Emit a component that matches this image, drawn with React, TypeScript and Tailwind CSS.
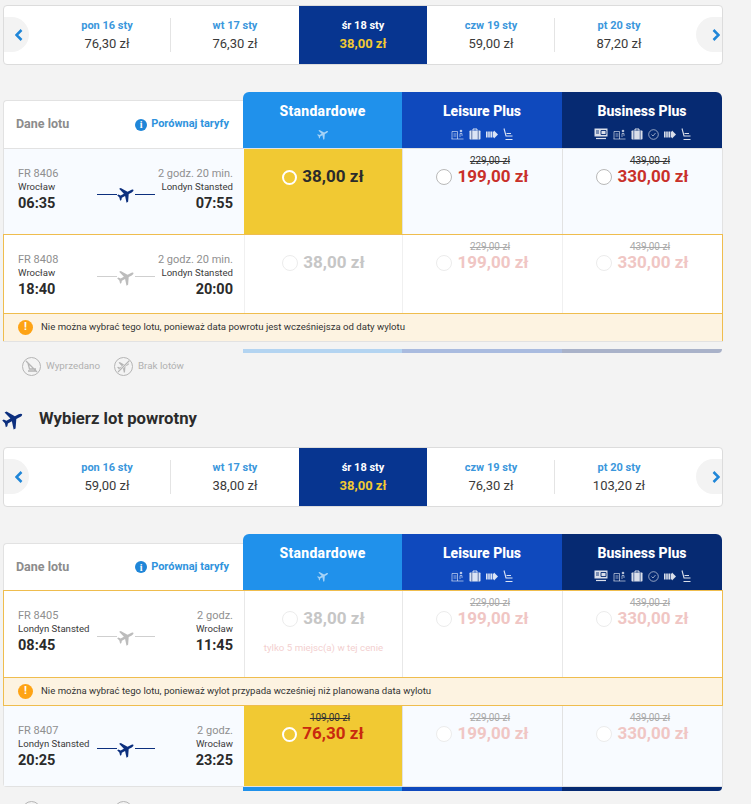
import React from "react";

const PLANE = "M12 .8c1 0 1.7 1.6 1.7 3.4v4.6l8.8 5.6v2.4l-8.8-2.5v4.9l2.5 2v1.9L12 22l-4.2 1.1v-1.9l2.5-2v-4.9L1.500 16.800v-2.400l8.8-5.600V4.200C10.300 2.400 11 .8 12 .8z";

function Plane({ size, className }: { size: number; className: string }) {
  return (
    <svg width={size} height={size} viewBox="0 0 24 24" className={className}>
      <path d={PLANE} fill="currentColor" transform="rotate(62 12 12)" />
    </svg>
  );
}

function Ico({ kind }: { kind: string }) {
  const c = "shrink-0 text-white/70";
  if (kind === "plane") return <Plane size={12} className="text-white/60" />;
  if (kind === "card")
    return (
      <svg width="14" height="12" viewBox="0 0 14 12" className="shrink-0 text-white/85">
        <rect x="0.500" y="0.500" width="13" height="8" fill="currentColor" />
        <path d="M2 3h3M2 5h3M7 2.500h5v4H7z" stroke="#062a72" fill="none" strokeWidth="0.900" />
        <path d="M2 10.500h10" stroke="currentColor" strokeWidth="1.200" />
      </svg>
    );
  if (kind === "board")
    return (
      <svg width="13" height="12" viewBox="0 0 13 12" fill="none" stroke="currentColor" strokeWidth="0.800" className={c}>
        <path d="M.5 11h12M1 3.500h5.500v7.500M1 3.500V11M2.500 6h3M2.500 8h3" />
        <circle cx="10" cy="3" r="1.300" fill="currentColor" stroke="none" />
        <path d="M9 9V5.500h2V8" />
      </svg>
    );
  if (kind === "bag")
    return (
      <svg width="12" height="12" viewBox="0 0 12 12" className="shrink-0 text-white/85">
        <path d="M4 2.500V1h4v1.500" fill="none" stroke="currentColor" />
        <rect x="0.500" y="2.500" width="11" height="9" rx="0.800" fill="currentColor" />
        <path d="M2.800 2.500v9M9.200 2.500v9" stroke="#062a72" strokeWidth="0.600" />
      </svg>
    );
  if (kind === "clock")
    return (
      <svg width="11" height="11" viewBox="0 0 11 11" fill="none" stroke="currentColor" strokeWidth="0.800" className={c}>
        <circle cx="5.500" cy="5.500" r="4.800" />
        <path d="M3.500 5.500l1.500 1.500 2.500-3" />
      </svg>
    );
  if (kind === "fast")
    return (
      <svg width="12" height="9" viewBox="0 0 12 9" className="shrink-0 text-white/85">
        <path d="M0 1.500h1.600v6H0zM2.200 1.500h1.600v6H2.200zM4.400 1.500H6v6H4.400zM6.600 1.500h1.400v6H6.600zM8 .5l4 4-4 4z" fill="currentColor" />
      </svg>
    );
  return (
    <svg width="10" height="13" viewBox="0 0 10 13" fill="none" stroke="currentColor" strokeWidth="1.100" className="shrink-0 text-white/85">
      <path d="M1 .5l2 7.500h6.500M3.500 5.500h4.500M2.500 11.500h7" />
    </svg>
  );
}

function DateBar({ items }: { items: [string, string][] }) {
  return (
    <div className="relative h-[60px] w-[720px] rounded border border-[#dcdcdc] bg-white pl-[39px]">
      <div className="flex h-full">
        {items.map(([d, p], i) => (
          <div
            key={d}
            className={
              i === 2
                ? "flex h-[58px] w-[128px] flex-col items-center justify-center bg-[#073590]"
                : "flex h-[58px] w-[128px] flex-col items-center justify-center"
            }
          >
            <div className={i === 2 ? "text-[11px] leading-[18px] font-bold text-white" : "text-[11px] leading-[18px] font-bold text-[#3b97dc]"}>{d}</div>
            <div className={i === 2 ? "text-[13px] leading-[18px] font-bold text-[#f1c933]" : "text-[13px] leading-[18px] text-[#3a3a3a]"}>{p}</div>
          </div>
        ))}
      </div>
      <div className="absolute top-[12px] left-[166px] h-[34px] w-px bg-[#e4e4e4]" />
      <div className="absolute top-[12px] left-[550px] h-[34px] w-px bg-[#e4e4e4]" />
      <div className="absolute top-[11px] left-0 flex h-[35px] w-[25px] items-center justify-center rounded-r-full bg-[#f3f3f3] pl-[4px]">
        <svg width="8" height="12" viewBox="0 0 8 12" fill="none" stroke="#1f86d8" strokeWidth="2.500"><path d="M6.500 1l-5 5 5 5" /></svg>
      </div>
      <div className="absolute top-[11px] right-0 flex h-[35px] w-[26px] items-center justify-center rounded-l-full bg-[#f3f3f3] pl-[14px]">
        <svg width="8" height="12" viewBox="0 0 8 12" fill="none" stroke="#1f86d8" strokeWidth="2.500" className="shrink-0"><path d="M1.500 1l5 5-5 5" /></svg>
      </div>
    </div>
  );
}

function Header({ tall }: { tall: boolean }) {
  return (
    <div className="flex h-[56px] w-[719px] items-end">
      <div className={tall ? "flex h-[48px] w-[240px] items-center justify-between rounded-tl border-t border-l border-[#e2e2e2] bg-white pr-[14px] pl-[12px]" : "flex h-[47px] w-[240px] items-center justify-between rounded-tl border-t border-l border-[#e2e2e2] bg-white pr-[14px] pl-[12px]"}>
        <span className="text-[12.500px] font-bold text-[#8c8c8c]">Dane lotu</span>
        <span className="flex items-center gap-[4px] text-[11px] font-bold text-[#2f93dd]">
          <span className="flex h-[12px] w-[12px] items-center justify-center rounded-full bg-[#1f86d8] font-['Liberation_Serif',serif] text-[10px] font-bold text-white">i</span>
          Porównaj taryfy
        </span>
      </div>
      <div className="flex h-[56px] w-[159px] flex-col items-center rounded-tl-md bg-[#2091eb] pt-[10px]">
        <div className="text-[14px] leading-[18px] font-extrabold tracking-[0.300px] text-white">Standardowe</div>
        <div className="mt-[7px] flex h-[14px] items-center"><Ico kind="plane" /></div>
      </div>
      <div className="flex h-[56px] w-[160px] flex-col items-center bg-[#0f49bd] pt-[10px]">
        <div className="text-[14px] leading-[18px] font-extrabold text-white">Leisure Plus</div>
        <div className="mt-[7px] flex h-[14px] items-center gap-[5px]">
          <Ico kind="board" /><Ico kind="bag" /><Ico kind="fast" /><Ico kind="seat" />
        </div>
      </div>
      <div className="flex h-[56px] w-[160px] flex-col items-center rounded-tr-md bg-[#062a72] pt-[10px]">
        <div className="text-[14px] leading-[18px] font-extrabold text-white">Business Plus</div>
        <div className="mt-[7px] flex h-[14px] items-center gap-[5px]">
          <Ico kind="card" /><Ico kind="board" /><Ico kind="bag" /><Ico kind="clock" /><Ico kind="fast" /><Ico kind="seat" />
        </div>
      </div>
    </div>
  );
}

function Info({ f }: { f: Flight }) {
  return (
    <div className="grid h-full w-[240px] shrink-0 grid-cols-[1fr_58px_1fr] pt-[18px] pr-[11px] pl-[14px]">
      <div>
        <div className="text-[11px] leading-[13px] text-[#8f8f8f]">{f.no}</div>
        <div className="text-[9.600px] leading-[13px] whitespace-nowrap text-[#3a3a3a]">{f.from}</div>
        <div className="mt-[1px] text-[14.500px] leading-[20px] font-bold text-[#2b2b2b]">{f.dep}</div>
      </div>
      <div className="flex items-center pt-[4px] pb-[17px]">
        <div className={f.active ? "h-px w-[20px] bg-[#0c2f7e]" : "h-px w-[20px] bg-[#cfcfcf]"} />
        <Plane size={18} className={f.active ? "shrink-0 text-[#0c2f7e]" : "shrink-0 text-[#bcbcbc]"} />
        <div className={f.active ? "h-px w-[20px] bg-[#0c2f7e]" : "h-px w-[20px] bg-[#cfcfcf]"} />
      </div>
      <div className="text-right">
        <div className="text-[11px] leading-[13px] whitespace-nowrap text-[#8f8f8f]">{f.dur}</div>
        <div className="text-[9.600px] leading-[13px] whitespace-nowrap text-[#3a3a3a]">{f.to}</div>
        <div className="mt-[1px] text-[14.500px] leading-[20px] font-bold text-[#2b2b2b]">{f.arr}</div>
      </div>
    </div>
  );
}

function Price({ old, price, mode, note }: { old?: string; price: string; mode: "sel" | "red" | "fadeGray" | "fadeRed"; note?: string }) {
  return (
    <div className="flex flex-col items-center pt-[7px]">
      <div className="flex items-end gap-[5px]">
        <div
          className={
            mode === "sel"
              ? "mb-[1px] h-[15px] w-[15px] rounded-full border-[2.500px] border-white"
              : mode === "red"
                ? "mb-[1px] h-[16px] w-[16px] rounded-full border border-[#b9b9b9] bg-white"
                : "mb-[1px] h-[16px] w-[16px] rounded-full border border-[#ececec] bg-white"
          }
        />
        <div className="flex flex-col items-center">
          <div className={mode === "fadeGray" || mode === "fadeRed" ? "h-[10px] pr-[6px] text-[10px] leading-[10px] text-[#a9a9a9] line-through" : "h-[10px] pr-[6px] text-[10px] leading-[10px] text-[#333333] line-through"}>{old}</div>
          <div
            className={
              "text-[17px] leading-[20px] font-bold " +
              (mode === "red" ? "text-[#c9302a]" : mode === "fadeRed" ? "text-[#f0c6c4]" : mode === "fadeGray" ? "text-[#c6c6c6]" : old ? "text-[#c9290f]" : "text-[#2b2b2b]")
            }
          >
            {price}
          </div>
        </div>
      </div>
      {note && <div className="mt-[14px] text-[9.700px] leading-[12px] text-[#f3cfcf]">{note}</div>}
    </div>
  );
}

type Flight = { no: string; from: string; to: string; dep: string; arr: string; dur: string; active: boolean };

function FareRow({ f, std, lp, bp, note, bg, bd, h, stdMode, lpMode, bpMode, stdOld }: { f: Flight; std: string; lp: string; bp: string; note?: string; bg: string; bd: string; h: string; stdMode: "sel" | "fadeGray"; lpMode: "red" | "fadeRed"; bpMode: "red" | "fadeRed"; stdOld?: string }) {
  return (
    <div className={"flex " + h + " " + bg}>
      <Info f={f} />
      <div className={stdMode === "sel" ? "h-full w-[158px] shrink-0 bg-[#f1c933]" : "h-full w-[158px] shrink-0 border-l " + bd}>
        <Price old={stdOld} price={std} mode={stdMode} note={note} />
      </div>
      <div className={"h-full w-[160px] shrink-0 border-l " + bd}>
        <Price old="229,00 zł" price={lp} mode={lpMode} />
      </div>
      <div className={"h-full w-[160px] shrink-0 border-l " + bd}>
        <Price old="439,00 zł" price={bp} mode={bpMode} />
      </div>
    </div>
  );
}

function Notice({ text }: { text: string }) {
  return (
    <div className="flex h-[28px] items-center gap-[8px] border-t border-[#efbd4e] bg-[#fdf3e1] pl-[14px] text-[9.600px] text-[#333333]">
      <span className="flex h-[15px] w-[15px] items-center justify-center rounded-full bg-[#fea314] text-[11px] font-bold text-white">!</span>
      {text}
    </div>
  );
}

function Bar({ faded }: { faded: boolean }) {
  return (
    <div className="ml-[240px] flex h-[4px] w-[479px] overflow-hidden rounded-br-md">
      <div className={faded ? "w-[159px] bg-[#b3d4f1]" : "w-[159px] bg-[#2091eb]"} />
      <div className={faded ? "w-[160px] bg-[#a9bbdf]" : "w-[160px] bg-[#0f49bd]"} />
      <div className={faded ? "w-[160px] bg-[#a9b2c9]" : "w-[160px] bg-[#062a72]"} />
    </div>
  );
}

function Legend({ labels }: { labels: boolean }) {
  return (
    <div className="flex h-[20px] items-center pl-[19px] text-[9.800px] text-[#b0b0b0]">
      <span className="flex h-[19px] w-[19px] items-center justify-center rounded-full border-[1.500px] border-[#b5b5b5]">
        <svg width="15" height="15" viewBox="0 0 15 15" fill="none" stroke="#b5b5b5" strokeWidth="1.300"><path d="M2 2l11 11M4 4l1.500 6H12M4 12h8" /></svg>
      </span>
      <span className="ml-[5px] w-[68px]">{labels ? "Wyprzedano" : ""}</span>
      <span className="relative flex h-[19px] w-[19px] items-center justify-center overflow-hidden rounded-full border-[1.500px] border-[#b5b5b5]">
        <Plane size={13} className="text-[#b5b5b5]" />
        <svg width="16" height="16" viewBox="0 0 16 16" className="absolute" fill="none"><path d="M2 14L14 2" stroke="#f3f3f3" strokeWidth="2.400" /><path d="M2 14L14 2" stroke="#b5b5b5" strokeWidth="1.100" /></svg>
      </span>
      <span className="ml-[5px]">{labels ? "Brak lotów" : ""}</span>
    </div>
  );
}

const DATES1: [string, string][] = [["pon 16 sty", "76,30 zł"], ["wt 17 sty", "76,30 zł"], ["śr 18 sty", "38,00 zł"], ["czw 19 sty", "59,00 zł"], ["pt 20 sty", "87,20 zł"]];
const DATES2: [string, string][] = [["pon 16 sty", "59,00 zł"], ["wt 17 sty", "38,00 zł"], ["śr 18 sty", "38,00 zł"], ["czw 19 sty", "76,30 zł"], ["pt 20 sty", "103,20 zł"]];

export default function App() {
  const WR = "Wrocław";
  const LS = "Londyn Stansted";
  return (
    <div className="h-[804px] overflow-hidden bg-[#f3f3f3] pt-[5px] pl-[3px] font-['Roboto',sans-serif]">
      <DateBar items={DATES1} />
      <div className="mt-[27px]">
        <Header tall />
        <div className="w-[720px] border-t border-[#e2e2e2]">
          <div className="border-x border-[#e2e2e2]">
            <FareRow f={{ no: "FR 8406", from: WR, to: LS, dep: "06:35", arr: "07:55", dur: "2 godz. 20 min.", active: true }} std="38,00 zł" lp="199,00 zł" bp="330,00 zł" bg="bg-[#f8fbff]" bd="border-[#e2e2e2]" h="h-[85px]" stdMode="sel" lpMode="red" bpMode="red" />
          </div>
          <div className="border-x border-t border-[#efbd4e] bg-white">
            <FareRow f={{ no: "FR 8408", from: WR, to: LS, dep: "18:40", arr: "20:00", dur: "2 godz. 20 min.", active: false }} std="38,00 zł" lp="199,00 zł" bp="330,00 zł" bg="bg-white" bd="border-[#f0f0f0]" h="h-[78px]" stdMode="fadeGray" lpMode="fadeRed" bpMode="fadeRed" />
            <Notice text="Nie można wybrać tego lotu, ponieważ data powrotu jest wcześniejsza od daty wylotu" />
          </div>
          <div className="h-px bg-[#e2e2e2]" />
        </div>
        <div className="mt-[7px]"><Bar faded /></div>
      </div>
      <div className="mt-[3px]"><Legend labels /></div>
      <div className="mt-[31px] flex h-[24px] items-center">
        <Plane size={22} className="-ml-[1px] text-[#0c2f7e]" />
        <span className="ml-[15px] text-[16.700px] font-bold text-[#2b2b2b]">Wybierz lot powrotny</span>
      </div>
      <div className="mt-[16px]"><DateBar items={DATES2} /></div>
      <div className="mt-[27px]">
        <Header tall={false} />
        <div className="w-[720px]">
          <div className="border border-[#efbd4e] bg-white">
            <FareRow f={{ no: "FR 8405", from: LS, to: WR, dep: "08:45", arr: "11:45", dur: "2 godz.", active: false }} std="38,00 zł" lp="199,00 zł" bp="330,00 zł" note="tylko 5 miejsc(a) w tej cenie" bg="bg-white" bd="border-[#e8e8e8]" h="h-[86px]" stdMode="fadeGray" lpMode="fadeRed" bpMode="fadeRed" />
            <Notice text="Nie można wybrać tego lotu, ponieważ wylot przypada wcześniej niż planowana data wylotu" />
          </div>
          <div className="rounded-bl border-x border-b border-[#e2e2e2]">
            <FareRow f={{ no: "FR 8407", from: LS, to: WR, dep: "20:25", arr: "23:25", dur: "2 godz.", active: true }} std="76,30 zł" stdOld="109,00 zł" lp="199,00 zł" bp="330,00 zł" bg="bg-[#f8fbff]" bd="border-[#e2e2e2]" h="h-[80px]" stdMode="sel" lpMode="fadeRed" bpMode="fadeRed" />
          </div>
        </div>
        <Bar faded={false} />
      </div>
      <div className="mt-[9px]"><Legend labels={false} /></div>
    </div>
  );
}
